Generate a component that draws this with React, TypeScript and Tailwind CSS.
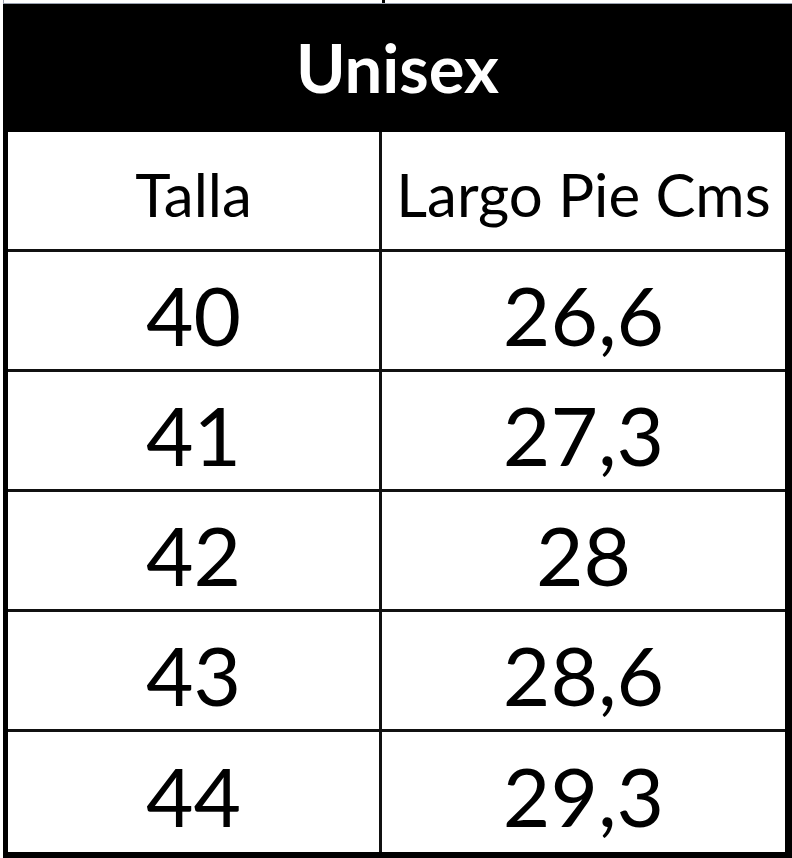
import React from 'react';

const rows = [
  { talla: '40', largo: '26,6' },
  { talla: '41', largo: '27,3' },
  { talla: '42', largo: '28' },
  { talla: '43', largo: '28,6' },
  { talla: '44', largo: '29,3' },
];

const font = { fontFamily: 'Lato, "Open Sans", "Liberation Sans", sans-serif' };

export default function App() {
  return (
    <div className="w-[792px] h-[858px] bg-white overflow-hidden" style={font}>
      <div className="ml-[3px] flex flex-col">
        {/* cut-off row above */}
        <div className="flex h-[4px] border-b border-gray-400">
          <div className="w-[379px] border-l border-gray-400" />
          <div className="w-[3px] bg-black" />
          <div className="flex-1" />
        </div>

        {/* title */}
        <div className="h-[128px] bg-black flex items-center justify-center pb-[2px]">
          <span className="text-white font-bold text-[67px] leading-none">Unisex</span>
        </div>

        {/* table body */}
        <div className="flex flex-col border-l-[5px] border-r-[7px] border-b-[6px] border-black">
          <div className="flex h-[120px] border-b-[3px] border-[#111]">
            <div className="w-[374px] border-r-[3px] border-[#111] flex items-center justify-center pt-[6px]">
              <span className="text-[60px] leading-none text-black">Talla</span>
            </div>
            <div className="flex-1 flex items-center justify-center pt-[6px]">
              <span className="text-[60px] leading-none text-black whitespace-nowrap">Largo Pie Cms</span>
            </div>
          </div>
          {rows.map((r, i) => (
            <div
              key={r.talla}
              className={`flex h-[120px] ${i < rows.length - 1 ? 'border-b-[3px] border-[#111]' : ''}`}
            >
              <div className="w-[374px] border-r-[3px] border-[#111] flex items-center justify-center pt-[6px]">
                <span className="text-[82px] leading-none text-black">{r.talla}</span>
              </div>
              <div className="flex-1 flex items-center justify-center pt-[6px]">
                <span className="text-[82px] leading-none text-black">{r.largo}</span>
              </div>
            </div>
          ))}
        </div>
      </div>
    </div>
  );
}
